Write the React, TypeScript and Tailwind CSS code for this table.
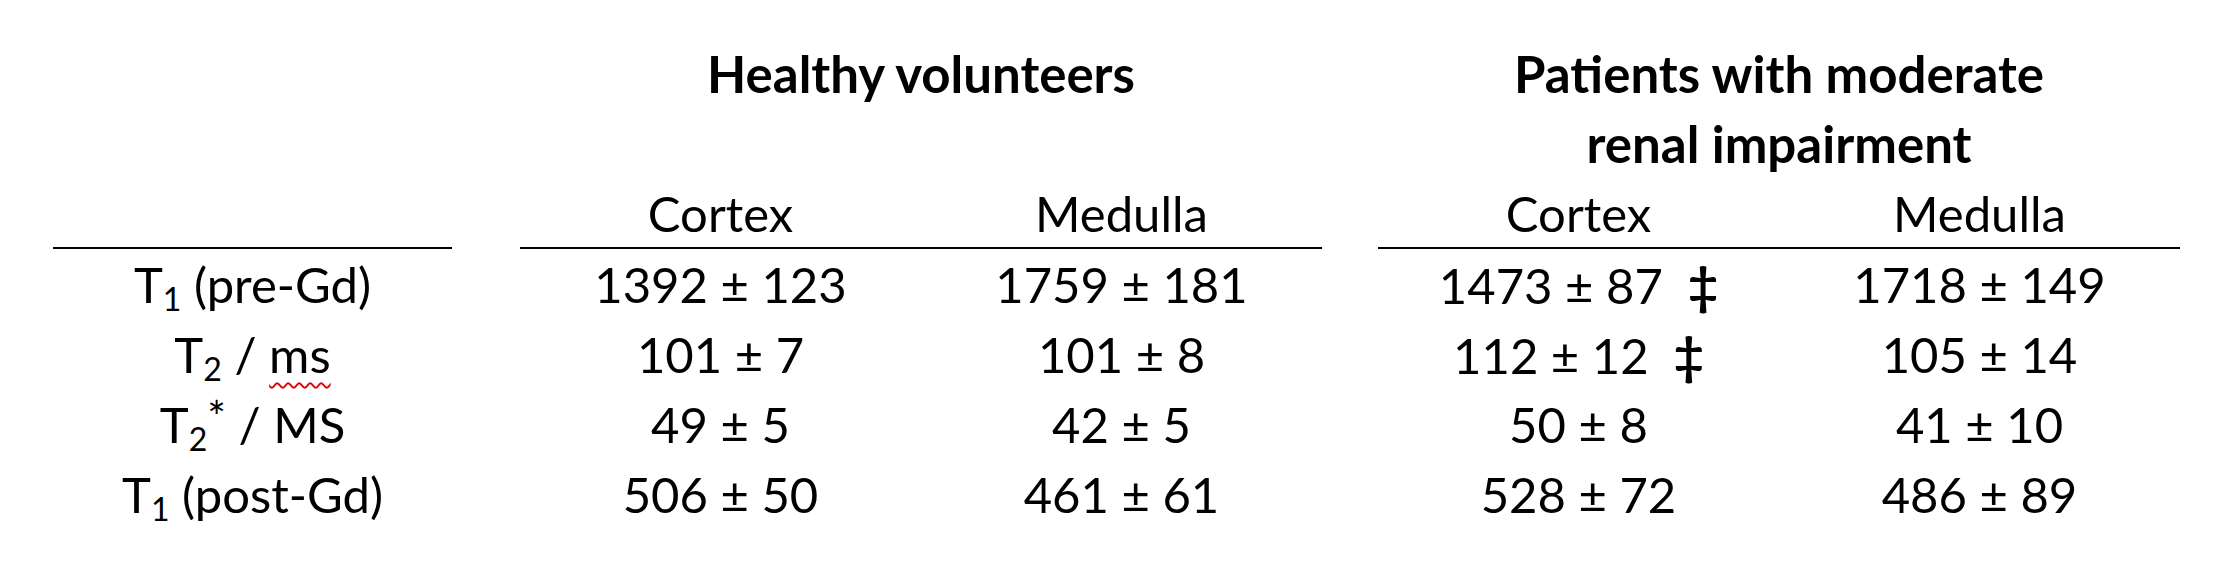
const cell = "h-[70px] leading-[70px] text-center whitespace-pre";
const rule = "h-[70px] leading-[68px] text-center border-b-2 border-black";

function Sub({ c }: { c: string }) {
  return <sub className="text-[32px] bottom-[-8px]">{c}</sub>;
}

const dagger = <span className="font-bold text-[52px]">‡</span>;

const rows: { label: React.ReactNode; vals: React.ReactNode[] }[] = [
  {
    label: (
      <>
        T<Sub c="1" /> (pre-Gd)
      </>
    ),
    vals: [
      "1392 ± 123",
      "1759 ± 181",
      <>
        1473 ± 87  {dagger}
      </>,
      "1718 ± 149",
    ],
  },
  {
    label: (
      <>
        T<Sub c="2" /> /{" "}
        <span className="underline decoration-wavy decoration-[#e00000] decoration-[1.5px] underline-offset-[9px]">ms</span>
      </>
    ),
    vals: [
      "101 ± 7",
      "101 ± 8",
      <>
        112 ± 12  {dagger}
      </>,
      "105 ± 14",
    ],
  },
  {
    label: (
      <>
        T<Sub c="2" />
        <sup className="text-[44px] top-[-10px]">*</sup> / MS
      </>
    ),
    vals: ["49 ± 5", "42 ± 5", "50 ± 8", "41 ± 10"],
  },
  {
    label: (
      <>
        T<Sub c="1" /> (post-Gd)
      </>
    ),
    vals: ["506 ± 50", "461 ± 61", "528 ± 72", "486 ± 89"],
  },
];

export default function App() {
  return (
    <div className="w-[2240px] h-[572px] bg-white text-black font-['Lato',sans-serif] text-[49px] pt-[39px] pl-[53px]">
      <div className="grid grid-cols-[399px_68px_401px_401px_56px_401px_401px]">
        {/* group headings */}
        <div className="row-span-2" />
        <div className="row-span-2" />
        <div className={`${cell} col-span-2 font-bold text-[51px]`}>Healthy volunteers</div>
        <div className="row-span-2" />
        <div className="col-span-2 row-span-2 text-center font-bold text-[51px] leading-[70px]">
          Patients with moderate
          <br />
          renal impairment
        </div>
        <div className="col-span-2 h-[70px]" />

        {/* sub headings */}
        <div className={rule} />
        <div />
        <div className={rule}>Cortex</div>
        <div className={rule}>Medulla</div>
        <div />
        <div className={rule}>Cortex</div>
        <div className={rule}>Medulla</div>

        {rows.map((r, i) => (
          <div key={i} className="contents">
            <div className={cell}>{r.label}</div>
            <div />
            <div className={cell}>{r.vals[0]}</div>
            <div className={cell}>{r.vals[1]}</div>
            <div />
            <div className={cell}>{r.vals[2]}</div>
            <div className={cell}>{r.vals[3]}</div>
          </div>
        ))}
      </div>
    </div>
  );
}
